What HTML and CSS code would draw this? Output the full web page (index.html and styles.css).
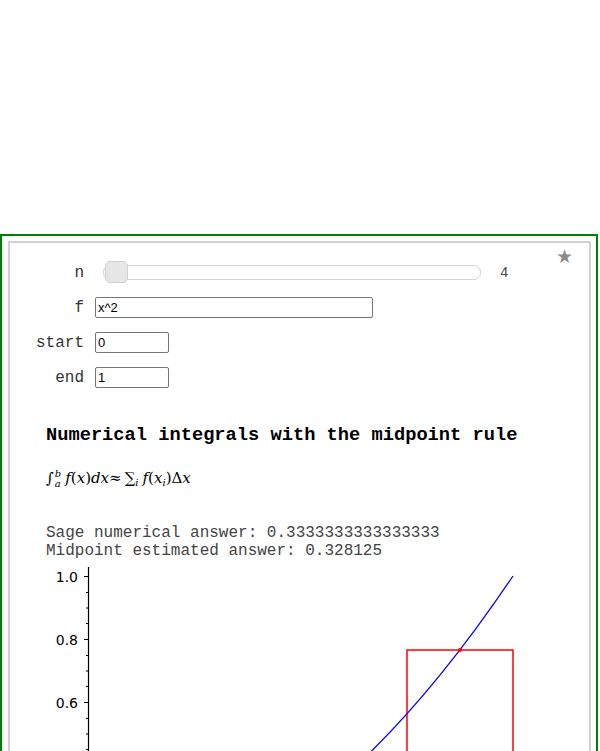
FILE: index.html
```html
<!DOCTYPE html>
<html>
<head>
<meta charset="utf-8">
<link rel="stylesheet" href="styles.css">
</head>
<body>
<div class="cell">
  <div class="interact">
    <span class="star">★</span>
    <div class="controls">
      <div class="label">n</div>
      <div class="slider-row">
        <div class="track"><div class="handle"></div></div>
        <span class="value">4</span>
      </div>
      <div class="label">f</div>
      <div class="field"><input class="input wide" type="text" value="x^2"></div>
      <div class="label">start</div>
      <div class="field"><input class="input short" type="text" value="0"></div>
      <div class="label">end</div>
      <div class="field"><input class="input short" type="text" value="1"></div>
    </div>
    <div class="output">
      <h3 class="title">Numerical integrals with the midpoint rule</h3>
      <div class="math"><span class="int">∫<span class="lims"><span class="sup">b</span><span class="sub">a</span></span></span><i>f</i>(<i>x</i>)<i>dx</i>≈<span class="sum">∑<span class="sub2">i</span></span><i>f</i>(<i>x</i><span class="sub3">i</span>)Δ<i>x</i></div>
      <pre class="result">Sage numerical answer: 0.3333333333333333
Midpoint estimated answer: 0.328125</pre>
      <svg class="plot" width="520" height="186" viewBox="0 0 520 186">
        <line x1="48.5" y1="2" x2="48.5" y2="340" stroke="#000" stroke-width="1.2"/>
        <g stroke="#000" stroke-width="1">
          <line x1="44" y1="11.5" x2="48.5" y2="11.5"/>
          <line x1="44" y1="74.5" x2="48.5" y2="74.5"/>
          <line x1="44" y1="137.5" x2="48.5" y2="137.5"/>
          <line x1="46" y1="27.5" x2="48.5" y2="27.5"/>
          <line x1="46" y1="43" x2="48.5" y2="43"/>
          <line x1="46" y1="58.5" x2="48.5" y2="58.5"/>
          <line x1="46" y1="90.5" x2="48.5" y2="90.5"/>
          <line x1="46" y1="106" x2="48.5" y2="106"/>
          <line x1="46" y1="121.5" x2="48.5" y2="121.5"/>
          <line x1="46" y1="153.5" x2="48.5" y2="153.5"/>
          <line x1="46" y1="169" x2="48.5" y2="169"/>
          <line x1="46" y1="184.5" x2="48.5" y2="184.5"/>
        </g>
        <g class="ticklabel" fill="#000" text-anchor="end">
          <text x="38" y="16.5">1.0</text>
          <text x="38" y="79.5">0.8</text>
          <text x="38" y="142.5">0.6</text>
        </g>
        <g fill="none" stroke="#f00" stroke-width="1.5">
          <rect x="261" y="202.95" width="106" height="123.05"/>
          <rect x="367" y="85" width="106" height="241"/>
        </g>
        <path d="M49 326 Q261 326 473 11" fill="none" stroke="#00f" stroke-width="1.3"/>
        <g fill="#f00">
          <circle cx="420" cy="85" r="2"/>
        </g>
      </svg>
    </div>
  </div>
</div>
</body>
</html>
```
FILE: styles.css
```css
html, body {
  margin: 0;
  padding: 0;
  background: #fff;
}
.cell {
  margin-top: 234px;
  width: 598px;
  box-sizing: border-box;
  border: 2px solid #008000;
  padding: 5px 5px 0 6px;
}
.interact {
  position: relative;
  border: 2px solid #d0d0d0;
  border-bottom: none;
  padding: 12px 0 0 0;
}
.star {
  position: absolute;
  top: 4px;
  right: 16px;
  font-family: "DejaVu Sans", sans-serif;
  font-size: 19px;
  color: #8a8a8a;
  line-height: 1;
}
.controls {
  display: grid;
  grid-template-columns: 74px 1fr;
  column-gap: 11px;
  grid-auto-rows: 35px;
  align-items: center;
}
.label {
  font-family: "Liberation Mono", monospace;
  font-size: 16px;
  color: #333;
  text-align: right;
}
.slider-row {
  display: flex;
  align-items: center;
  padding-left: 8px;
}
.track {
  position: relative;
  width: 376px;
  height: 13px;
  border: 1px solid #d6d6d6;
  border-radius: 7px;
  background: #fff;
}
.handle {
  position: absolute;
  left: 1px;
  top: -5px;
  width: 21px;
  height: 20px;
  border: 1px solid #d0d0d0;
  border-radius: 5px;
  background: #e6e6e6;
}
.value {
  margin-left: 19px;
  font-family: "Liberation Mono", monospace;
  font-size: 14px;
  color: #444;
}
.input {
  box-sizing: border-box;
  height: 21px;
  border: 1px solid #767676;
  border-radius: 2px;
  padding: 1px 2px;
  font-family: "Liberation Sans", sans-serif;
  font-size: 13px;
  color: #000;
  display: block;
}
.wide { width: 278px; }
.short { width: 74px; }
.output {
  padding-left: 36px;
}
.title {
  margin: 29px 0 0 0;
  font-family: "Liberation Mono", monospace;
  font-size: 18.72px;
  font-weight: bold;
  line-height: 22px;
  color: #000;
}
.math {
  margin-top: 20px;
  font-family: "DejaVu Serif", serif;
  font-size: 15px;
  color: #000;
  line-height: 24px;
  white-space: nowrap;
}
.math i { font-style: italic; }
.int {
  display: inline-block;
  font-style: italic;
  margin-right: 4px;
}
.lims {
  display: inline-flex;
  flex-direction: column;
  vertical-align: middle;
  font-size: 10px;
  font-style: italic;
  line-height: 10px;
  margin-left: 1px;
}
.sum {
  margin-left: 3px;
  margin-right: 4px;
}
.sub2, .sub3 {
  font-size: 10px;
  font-style: italic;
  vertical-align: -3px;
}
.result {
  margin: 29px 0 0 0;
  font-family: "Liberation Mono", monospace;
  font-size: 16px;
  line-height: 18px;
  color: #444;
}
.plot {
  display: block;
  margin: 5px 0 0 -6px;
}
.ticklabel {
  font-family: "DejaVu Sans", sans-serif;
  font-size: 14px;
}
```
